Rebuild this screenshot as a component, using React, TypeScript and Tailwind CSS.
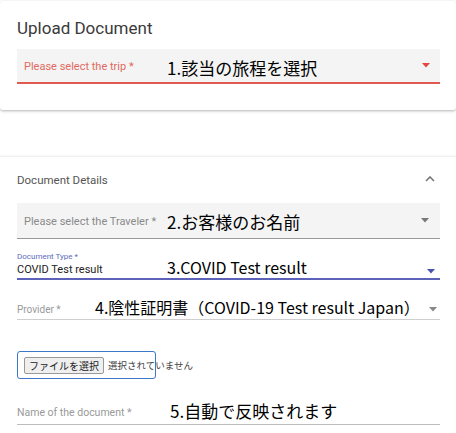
import React from 'react';

const Caret = ({ color }: { color: string }) => (
  <svg width="8" height="5" viewBox="0 0 8 5" className="shrink-0">
    <path d="M0 0h8L4 4.5z" fill={color} />
  </svg>
);

const note = 'absolute text-black whitespace-nowrap font-["Noto_Sans_CJK_JP",sans-serif] leading-none';

export default function App() {
  return (
    <div className='relative w-[456px] h-[433px] overflow-hidden bg-white font-["Roboto",sans-serif]'>
      {/* upload card */}
      <div className="mt-px h-[109px] bg-white rounded-[3px] shadow-[0_1px_3px_rgba(0,0,0,0.3)] px-[17px] pt-[16px]">
        <h1 className="text-[17px] leading-[22px] text-[#3a3a3a] font-normal">Upload Document</h1>
        <div className="relative mt-[10px] h-[35px] w-[423px] bg-[#f4f4f4] border-b-2 border-[#e05a50] flex items-center pl-[7px] pr-[10px]">
          <span className="mt-[4px] text-[11px] text-[#e06a60]">Please select the trip *</span>
          <span className={`${note} left-[150px] top-[10px] text-[17px]`}>1.該当の旅程を選択</span>
          <div className="ml-auto"><Caret color="#e04a40" /></div>
        </div>
      </div>

      {/* details card */}
      <div className="mt-[46px] h-[300px] bg-white border-t border-[#f0f0f0] shadow-[0_0_2px_rgba(0,0,0,0.08)] px-[17px] pt-[17px]">
        <div className="flex items-center h-[14px] pr-[4px]">
          <span className="text-[11.5px] text-[#555]">Document Details</span>
          <svg width="10" height="6" viewBox="0 0 10 6" className="ml-auto mt-[-4px]">
            <path d="M1 5l4-4 4 4" stroke="#777" strokeWidth="1.6" fill="none" />
          </svg>
        </div>

        <div className="relative mt-[15px] h-[36px] w-[423px] bg-[#f4f4f4] border-b border-[#9a9a9a] flex items-center pl-[7px] pr-[11px]">
          <span className="mt-[3px] text-[11px] text-[#8a8a8a]">Please select the Traveler *</span>
          <span className={`${note} left-[150px] top-[10px] text-[17px]`}>2.お客様のお名前</span>
          <div className="ml-auto"><Caret color="#777" /></div>
        </div>

        <div className="relative mt-[13px] h-[28px] w-[423px] border-b-2 border-[#5c62b8]">
          <div className="text-[8px] leading-[10px] text-[#5c6bc0]">Document Type *</div>
          <div className="flex items-center h-[16px] pr-[5px]">
            <span className="text-[11px] text-[#222]">COVID Test result</span>
            <div className="ml-auto mt-[2px]"><Caret color="#4a52b0" /></div>
          </div>
          <span className={`${note} left-[150px] top-[7px] text-[16px]`}>3.COVID Test result</span>
        </div>

        <div className="relative mt-[22px] h-[18px] w-[423px] border-b border-[#cfcfcf] flex items-start pr-[3px]">
          <span className="text-[10px] text-[#999]">Provider *</span>
          <span className={`${note} left-[78px] top-[-3px] text-[16px]`}>4.陰性証明書（COVID-19 Test result Japan）</span>
          <div className="ml-auto mt-[5px]"><Caret color="#888" /></div>
        </div>

        <div className="mt-[31px] h-[28px] w-[139px] border-[1.5px] border-[#3b78c8] rounded-[3px] flex items-center pl-[6px] whitespace-nowrap">
          <span className='h-[17px] px-[4px] bg-[#efefef] border border-[#999] rounded-[2px] text-[10px] leading-[15px] text-[#222] font-["Noto_Sans_CJK_JP",sans-serif]'>ファイルを選択</span>
          <span className='ml-[4px] text-[9.5px] text-[#444] font-["Noto_Sans_CJK_JP",sans-serif]'>選択されていません</span>
        </div>

        <div className="relative mt-[29px] h-[17px] w-[423px] border-b border-[#bdbdbd]">
          <div className="text-[10.5px] leading-[10px] text-[#999]">Name of the document *</div>
          <span className={`${note} left-[153px] top-[-6px] text-[17px]`}>5.自動で反映されます</span>
        </div>
      </div>
    </div>
  );
}
